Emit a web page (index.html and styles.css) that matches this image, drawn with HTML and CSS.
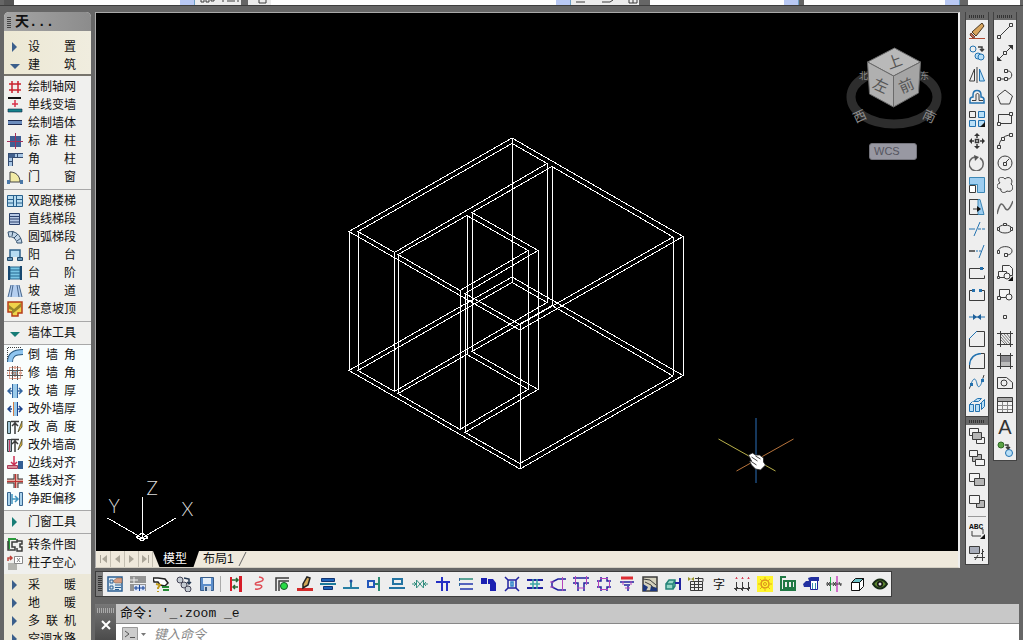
FILE: index.html
```html
<!DOCTYPE html>
<html lang="zh-CN">
<head>
<meta charset="utf-8">
<title>CAD</title>
<link rel="stylesheet" href="styles.css">
</head>
<body>
<div class="app">
<header class="topbar">
  <div class="strip strip-a"><select class="combo" aria-label="工作空间"></select><svg class="bits" viewBox="0 0 46 5"><path class="k" d="M6 0v2h3v-2m2 0v2h3v-2m2 0v1h3v-1M28 0v2M32 1h8M43 0v2"/></svg></div>
  <div class="strip strip-b"><svg class="bits-s" viewBox="0 0 23 5"><path class="k" d="M11 0v3h7v-3"/></svg><select class="combo" aria-label="图层"></select><svg class="bits-l" viewBox="0 0 68 5"><path class="k" d="M5 2h9M31 2h8l3-2M58 0v3h8v-3M62 0v3"/></svg></div>
  <div class="strip strip-c"><select class="combo" aria-label="颜色"></select></div>
  <div class="strip strip-d"><select class="combo" aria-label="线型"></select></div>
  <div class="strip strip-e"></div>
</header>
<div class="main">
<nav class="side" aria-label="天正屏幕菜单">
  <h1 class="side-title">天...</h1>
  <div class="group head">
    <button class="item"><svg class="ico" viewBox="0 0 16 16"><path fill="#3b5f8c" d="M5 3l5 5-5 5z"/></svg><span class="lbl">设 置</span></button>
    <button class="item"><svg class="ico" viewBox="0 0 16 16"><path fill="#3b5f8c" d="M3 7h10l-5 5z"/></svg><span class="lbl">建 筑</span></button>
  </div>
  <div class="group">
    <button class="item"><svg class="ico" viewBox="0 0 16 16"><path stroke="#c8202c" stroke-width="1.5" d="M5 2v12M11 2v12M2 5h12M2 11h12"/></svg><span class="lbl">绘制轴网</span></button>
    <button class="item"><svg class="ico" viewBox="0 0 16 16"><path fill="#111" d="M1 0h13v2H1z"/><path fill="#15838c" stroke="#124" stroke-width=".6" d="M1 12h14v3H1z"/><path stroke="#d8304a" stroke-width="1.5" d="M8 3v7M5 7h6"/></svg><span class="lbl">单线变墙</span></button>
    <button class="item"><svg class="ico" viewBox="0 0 16 16"><path fill="#6c8dbd" d="M1 5h14v5H1z"/><path stroke="#1d2b50" d="M1 5.500h14M1 9.500h14"/></svg><span class="lbl">绘制墙体</span></button>
    <button class="item"><svg class="ico" viewBox="0 0 16 16"><path fill="#3f5e94" d="M3 3h11v11H3z"/><path stroke="#a3305c" d="M8.500 0v16M0 8.500h16"/></svg><span class="lbl">标 准 柱</span></button>
    <button class="item"><svg class="ico" viewBox="0 0 16 16"><path fill="#a8c6e4" d="M1 2h15v5H6v8H1z"/><path fill="#41608e" d="M1 2h7v5H1z"/><path stroke="#344b70" d="M1 2.500h15M1.500 2v13M5.500 15V6.500H16M10.500 3v3M2 10.500h3"/></svg><span class="lbl">角 柱</span></button>
    <button class="item"><svg class="ico" viewBox="0 0 16 16"><path fill="#f2eba5" stroke="#444" d="M3 13V3c6 0 10 4 10 10z"/><path fill="#4a78a8" d="M0 11h3v4H0zM13 11h3v4h-3z"/></svg><span class="lbl">门 窗</span></button>
  </div>
  <div class="group">
    <button class="item"><svg class="ico" viewBox="0 0 16 16"><path fill="#b8dcf0" stroke="#28608c" d="M.5 2.500h15v11H.5zM6.500 2v12M9.500 2v12M1 6.500h5M1 10h5M10 6.500h5M10 10h5"/></svg><span class="lbl">双跑楼梯</span></button>
    <button class="item"><svg class="ico" viewBox="0 0 16 16"><path fill="#b6c8e4" stroke="#2b416c" d="M2.500 2.500h10v11h-10zM3 5.500h10M3 8h10M3 11h10"/></svg><span class="lbl">直线梯段</span></button>
    <button class="item"><svg class="ico" viewBox="0 0 16 16"><path fill="#c3d6e8" stroke="#34506c" d="M1 3c7-2 13 3 14 11h-5C9 10 6 7 2 8zM6 2L5 7M11 5L7 9M14 9l-4 3"/></svg><span class="lbl">圆弧梯段</span></button>
    <button class="item"><svg class="ico" viewBox="0 0 16 16"><path fill="#b7dcf2" stroke="#31638c" stroke-width="1.500" d="M3 10V3h10v7"/><path fill="#6c9abb" stroke="#234a6c" d="M.5 10.500h5v3h-5zM10.500 10.500h5v3h-5z"/></svg><span class="lbl">阳 台</span></button>
    <button class="item"><svg class="ico" viewBox="0 0 16 16"><path fill="#79c6e5" stroke="#25648c" d="M3 2h10v12H3zM3 5h10M3 8h10M3 11h10"/><path stroke="#174870" stroke-width="2" d="M2 1v14M14 1v14"/></svg><span class="lbl">台 阶</span></button>
    <button class="item"><svg class="ico" viewBox="0 0 16 16"><path fill="#b5cff0" d="M4 2h8l3 12H1z"/><path stroke="#45658c" d="M4 2L1 14M12 2l3 12M6 2L4 14M10 2l2 12"/></svg><span class="lbl">坡 道</span></button>
    <button class="item"><svg class="ico" viewBox="0 0 16 16"><path fill="#efd24a" stroke="#b63c18" stroke-width="1.500" d="M1 1h14v11h-4v3H5v-4H1z"/><path fill="#98862a" d="M2 4l5 4 7-6v4l-5 4-4 3V9L2 8z"/></svg><span class="lbl">任意坡顶</span></button>
  </div>
  <div class="group tight">
    <button class="item"><svg class="ico" viewBox="0 0 16 16"><path fill="#177c76" d="M3 7h10l-5 5z"/></svg><span class="lbl">墙体工具</span></button>
  </div>
  <div class="group white">
    <button class="item"><svg class="ico" viewBox="0 0 16 16"><path stroke="#29597f" stroke-width="6" d="M3 15C3 8 7 5 16 5"/><path stroke="#8fc5ef" stroke-width="4" d="M3 15C3 8 7 5 16 5"/><path class="k" stroke-dasharray="1 1" d="M.5 12V.5H14"/></svg><span class="lbl">倒 墙 角</span></button>
    <button class="item"><svg class="ico" viewBox="0 0 16 16"><path fill="#94bcc9" d="M5 5h6v6H5z"/><path stroke="#555" d="M0 5.500h16M0 10.500h16M5.500 1v14M10.500 1v14"/><path stroke="#c75a3a" stroke-dasharray="1 1" d="M2.500 2.500h11v11h-11zM0 8h16M8 1v14"/></svg><span class="lbl">修 墙 角</span></button>
    <button class="item"><svg class="ico" viewBox="0 0 16 16"><path fill="#9bcbea" d="M6 1h4v14H6z"/><path stroke="#3265a0" d="M5.500 1v14M10.500 1v14"/><path stroke="#3265a0" stroke-width="1.500" d="M1 8h4M4 5L1 8l3 3M11 8h4M12 5l3 3-3 3"/></svg><span class="lbl">改 墙 厚</span></button>
    <button class="item"><svg class="ico" viewBox="0 0 16 16"><path fill="#9bcbea" d="M6 1h5v14H6z"/><path stroke="#d37b42" d="M6.500 1v14"/><path stroke="#1d438c" d="M10.500 1v14"/><path stroke="#1d438c" stroke-width="1.500" d="M1 8h4M4 5L1 8l3 3M11 8h4M12 5l3 3-3 3"/></svg><span class="lbl">改外墙厚</span></button>
    <button class="item"><svg class="ico" viewBox="0 0 16 16"><path fill="#a1c7d8" stroke="#344" d="M.5 2.500h3v12h-3z"/><path class="k" stroke-width="1.500" d="M4 2.500h8M8 3v12M5 7l3-3 3 3"/><path fill="#e6bf3e" stroke="#332" stroke-width=".7" d="M12 10l3-8v6l-4 5z"/></svg><span class="lbl">改 高 度</span></button>
    <button class="item"><svg class="ico" viewBox="0 0 16 16"><path fill="#a7a6b7" stroke="#344" d="M.5 2.500h4v12h-4z"/><path stroke="#c53d65" d="M2.500 3v12"/><path class="k" stroke-width="1.500" d="M4 2.500h8M8 3v12M5 7l3-3 3 3"/><path fill="#e6bf3e" stroke="#332" stroke-width=".7" d="M12 10l3-8v6l-4 5z"/></svg><span class="lbl">改外墙高</span></button>
    <button class="item"><svg class="ico" viewBox="0 0 16 16"><path fill="#325e94" d="M11 6h5v8h-5z"/><path fill="#d98c98" stroke="#a73c59" d="M.5 10.500h10v3H.5z"/><path stroke="#cc3154" stroke-width="1.500" d="M7 1v9M4 7l3 3 3-3"/></svg><span class="lbl">边线对齐</span></button>
    <button class="item"><svg class="ico" viewBox="0 0 16 16"><path stroke="#333" stroke-width="5" d="M0 8h16M9 1v14"/><path stroke="#e9b1a8" stroke-width="3" d="M0 8h16M9 1v14"/><path stroke="#bd3534" d="M0 8.500h16M8.500 1v14"/></svg><span class="lbl">基线对齐</span></button>
    <button class="item"><svg class="ico" viewBox="0 0 16 16"><path fill="#a9d1eb" stroke="#37658f" d="M.5 1.500h3v13h-3zM12.500 1.500h3v13h-3z"/><path stroke="#3f94bf" stroke-width="1.500" d="M5 3v10M5 8h6M8 5l3 3-3 3"/></svg><span class="lbl">净距偏移</span></button>
  </div>
  <div class="group tight">
    <button class="item"><svg class="ico" viewBox="0 0 16 16"><path fill="#177c76" d="M5 3l5 5-5 5z"/></svg><span class="lbl">门窗工具</span></button>
  </div>
  <div class="group last">
    <button class="item"><svg class="ico" viewBox="0 0 16 16"><path stroke="#2a9a3c" stroke-width="2" d="M2 12V2h7"/><path class="k" stroke-width="1.500" d="M1 4v9h7v-3H5V5h5V2M10 4h5v3h-2v3h2v4h-5v-3"/></svg><span class="lbl">转条件图</span></button>
    <button class="item"><svg class="ico" viewBox="0 0 16 16"><path fill="#b3b3ae" d="M1 8h9v7H1z"/><path fill="#fff" stroke="#888" d="M7.500 1.500h8v7h-8zM10 3l3 4M13 3l-3 4"/><path stroke="#bd4038" stroke-width="1.500" d="M1 6V3h4M3 1l2 2-2 2"/></svg><span class="lbl">柱子空心</span></button>
  </div>
  <div class="group rest">
    <button class="item"><svg class="ico" viewBox="0 0 16 16"><path fill="#3b5f8c" d="M5 3l5 5-5 5z"/></svg><span class="lbl">采 暖</span></button>
    <button class="item"><svg class="ico" viewBox="0 0 16 16"><path fill="#3b5f8c" d="M5 3l5 5-5 5z"/></svg><span class="lbl">地 暖</span></button>
    <button class="item"><svg class="ico" viewBox="0 0 16 16"><path fill="#3b5f8c" d="M5 3l5 5-5 5z"/></svg><span class="lbl">多 联 机</span></button>
    <button class="item"><svg class="ico" viewBox="0 0 16 16"><path fill="#3b5f8c" d="M5 3l5 5-5 5z"/></svg><span class="lbl">空调水路</span></button>
  </div>
</nav>
<div class="work">
<div class="upper">
<main class="drawing">
  <div class="canvas">
  <svg class="scene" viewBox="97 13 861 538" role="img" aria-label="三维线框模型">
    <defs>
      <path id="plan" d="M512.500 138L683.500 236.500L520.500 330L349.500 231.500Z M395 252.500L358.500 231.500L512.500 143.500L547.500 163.500Z M398.500 254.500L467.500 215.500L528.500 250.500L460.500 290.500Z M465.500 293.500L538.500 250.500L472.500 212.500L552.500 166.500L673.500 237L520.500 324.500Z"/>
    </defs>
    <g class="wire">
      <use href="#plan"/><use href="#plan" y="139"/>
      <path d="M349.500 231v139M358.500 231v139M395 252v139M398.500 254v139M460.500 290v139M465.500 293v139M467.500 215v139M472.500 212v139M528.500 250v139M538.500 250v139M512.500 138v144M547.500 163v139M552.500 166v139M673.500 237v138M683.500 236v139M520.500 324v145"/>
      <path d="M142.500 497v41L108 518M142.500 538l34-20"/>
      <path d="M142.500 533l6 4-6 4-6-4zM137 538h11"/>
    </g>
    <g class="axis"><text x="109" y="513">Y</text><text x="147" y="495">Z</text><text x="182" y="516">X</text></g>
    <ellipse cx="894.500" cy="97" rx="43" ry="27" stroke="#2d2d2d" stroke-width="9"/>
    <path fill="#b9b9b9" stroke="#6a6a6a" d="M895 48l26 14-27 14-26-14z"/>
    <path fill="#b0b0b0" stroke="#6a6a6a" d="M868 62l26 14v31l-24-13z"/>
    <path fill="#a5a5a5" stroke="#6a6a6a" d="M921 62l-27 14v31l25-14z"/>
    <g class="face"><text x="895" y="67" transform="rotate(-20 895 62)">上</text><text x="881" y="91" transform="rotate(24 881 86)">左</text><text x="907" y="91" transform="rotate(-24 907 86)">前</text></g>
    <g class="compass"><text x="860" y="121" transform="rotate(-25 860 116)">西</text><text x="930" y="121" transform="rotate(25 930 116)">南</text><text class="far" x="864" y="79">北</text><text class="far" x="925" y="79">东</text></g>
    <path stroke="#2b6fb8" d="M756.500 418v65"/><path stroke="#b8b04a" d="M719 439l57 32"/><path stroke="#b8743c" d="M794 439l-57 32"/>
    <path fill="#fff" stroke="#222" stroke-width=".8" d="M749 455l4-2 3 2 4 0 4 3 0 4 2 3-5 5-5-1-4-4-2-4h2z"/><path stroke="#444" d="M752 457l6 4M751 461l6 4M756 456l5 3"/>
  </svg>
  <button class="wcs">WCS</button>
  </div>
  <div class="tabs">
    <button class="nav" aria-label="第一个"><svg viewBox="0 0 14 14"><path fill="#aaa598" d="M3 3h1v8H3zM10 3v8L5 7z"/></svg></button><button class="nav" aria-label="上一个"><svg viewBox="0 0 14 14"><path fill="#aaa598" d="M9 3v8L4 7z"/></svg></button><button class="nav" aria-label="下一个"><svg viewBox="0 0 14 14"><path fill="#aaa598" d="M4 3v8l5-4z"/></svg></button><button class="nav" aria-label="最后一个"><svg viewBox="0 0 14 14"><path fill="#aaa598" d="M3 3v8l5-4zM9 3h1v8H9z"/></svg></button>
    <button class="tab active">模型</button>
    <button class="tab">布局1</button><svg class="slash" viewBox="0 0 10 16"><path stroke="#666" d="M1 15L8 1"/></svg>
  </div>
</main>
<aside class="palettes">
 <div class="col">
 <div class="palette" role="toolbar" aria-label="修改">
  <div class="grip"></div>
  <button title="删除"><svg class="ico" viewBox="0 0 16 16"><path stroke="#b04a33" d="M0 15.500h16"/><path fill="#c4705c" stroke="#70402c" d="M2 10l4 4-2 1-3-3z"/><path fill="#d9a55d" stroke="#48351f" d="M3 9L13 0l2 3-8 10z"/></svg></button>
  <button title="复制"><svg class="ico" viewBox="0 0 16 16"><circle class="b" cx="4" cy="4" r="3"/><circle class="lb b" cx="9" cy="11" r="3"/><circle class="lb b" cx="12" cy="12" r="3"/><path class="k" stroke-width="1.500" d="M9 2h4v4M11 4l2 2 2-2"/></svg></button>
  <button title="镜像"><svg class="ico" viewBox="0 0 16 16"><path class="k" d="M5.500 2v12H.5zM8 0v16"/><path class="lb b" d="M10.500 2v12h5z"/></svg></button>
  <button title="偏移"><svg class="ico" viewBox="0 0 16 16"><path class="b" stroke-width="1.500" d="M1 14v-3q0-3 3-3V6c0-6 8-6 8 0v2q3 0 3 3v3z"/><path class="k" d="M3 11.500h4V6c0-2 3-2 3 0v5.500h4"/></svg></button>
  <button title="阵列"><svg class="ico" viewBox="0 0 16 16"><path class="k" d="M.5.500h6v6h-6z"/><path class="lb b" d="M9.500.500h6v6h-6zM.5 9.500h6v6h-6zM9.500 9.500h6v3l-3 3h-3z"/><path fill="#111" d="M16 11v5h-5z"/></svg></button>
  <button title="移动"><svg class="ico" viewBox="0 0 16 16"><path class="k" stroke-width="1.500" d="M6.500 6.500h3v3h-3zM8 1v4M8 11v4M1 8h4M11 8h4"/><path fill="#333" d="M8 0l3 3H5zM8 16l3-3H5zM0 8l3-3v6zM16 8l-3-3v6z"/></svg></button>
  <button title="旋转"><svg class="ico" viewBox="0 0 16 16"><path stroke="#666" stroke-width="1.500" d="M6 2a7 7 0 1 0 5 1"/><path fill="#555" d="M5 0l5 2-4 4z"/></svg></button>
  <button title="缩放"><svg class="ico" viewBox="0 0 16 16"><path fill="#9dcdf0" stroke="#3c87b5" d="M.5.500h15v15h-7v-8h-8z"/><path fill="#fff" class="k" d="M.5 8.500h6v7h-6z"/></svg></button>
  <button title="拉伸"><svg class="ico" viewBox="0 0 16 16"><path fill="#9dcdf0" stroke="#3c87b5" d="M9 .5h2l4 15H9z"/><path class="k" d="M9 .5H.5v15H9M4 10h5"/><path fill="#111" d="M8 7l4 3-4 3z"/></svg></button>
  <button title="修剪"><svg class="ico" viewBox="0 0 16 16"><path class="b" d="M11 1L5 15M0 8h6"/><path class="b" stroke-dasharray="3 1" d="M9 8h7"/></svg></button>
  <button title="延伸"><svg class="ico" viewBox="0 0 16 16"><path class="b" d="M15 2l-5 13"/><path class="k" stroke-width="1.500" d="M0 8h6"/><path class="b" stroke-dasharray="2 1" d="M7 8h5"/></svg></button>
  <button title="打断于点"><svg class="ico" viewBox="0 0 16 16"><path class="k" d="M15 3.500H.5v10h15v-3"/><path fill="#2470ad" d="M11 2h3v3h-3z"/></svg></button>
  <button title="打断"><svg class="ico" viewBox="0 0 16 16"><path class="k" d="M3 3.500H.5v10h15v-10H13"/><path fill="#2470ad" d="M3 2h3v3H3zM10 2h3v3h-3z"/></svg></button>
  <button title="合并"><svg class="ico" viewBox="0 0 16 16"><path class="b" d="M0 8h16"/><path fill="#1d5f9a" d="M4 5l4 3-4 3zM12 5L8 8l4 3z"/></svg></button>
  <button title="倒角"><svg class="ico" viewBox="0 0 16 16"><path class="k" d="M.5 8v7.500h15V.5H8"/><path class="b" d="M0 8l8-8"/></svg></button>
  <button title="圆角"><svg class="ico" viewBox="0 0 16 16"><path class="k" d="M.5 12v3.500h15V.5H12"/><path class="b" stroke-width="1.500" d="M.5 12C1 5 5 1 12 .5"/></svg></button>
  <button title="光顺曲线"><svg class="ico" viewBox="0 0 16 16"><path class="b" d="M2 9c3-8 5-5 6 0s4 3 6-6"/><path class="k" d="M0 14l2-4M14 3l1-3"/><path fill="#2470ad" d="M1 8h3v3H1zM12 4h3v3h-3z"/></svg></button>
  <button title="分解"><svg class="ico" viewBox="0 0 16 16"><path class="lb b" d="M.5 7.500h4v7h-4zM4.500 4.500l4-3h4l-3 3zM6.500 7.500h4v7h-4zM12.500 5.500l3-3v7l-3 3zM.5 7.500l3-3M10.500 7.500l2-2"/></svg></button>
 </div>
 <div class="palette order" role="toolbar" aria-label="绘图次序">
  <div class="grip"></div>
  <button title="前置"><svg class="ico" viewBox="0 0 16 16"><path class="pf k" d="M.5.500h9v7h-9zM7.500 9.500h8v6h-8z"/><path class="gf k" d="M3.500 4.500h9v7h-9z"/></svg></button>
  <button title="后置"><svg class="ico" viewBox="0 0 16 16"><path class="gf k" d="M3.500 4.500h9v7h-9z"/><path class="pf k" d="M.5.500h8v6h-8zM6.500 9.500h9v6h-9z"/></svg></button>
  <button title="置于对象之上"><svg class="ico" viewBox="0 0 16 16"><path class="pf k" d="M.5 1.500h10v8H.5z"/><path class="gf k" d="M5.500 6.500h10v7h-10z"/></svg></button>
  <button title="置于对象之下"><svg class="ico" viewBox="0 0 16 16"><path class="gf k" d="M7.500 6.500h8v7h-8z"/><path class="pf k" d="M.5 1.500h10v8H.5z"/></svg></button>
  <i class="hsep"></i>
  <button title="注释前置"><svg class="ico" viewBox="0 0 16 16"><text class="abc" x="0" y="6">ABC</text><path class="k" d="M3 8v5h9M12 6h2v5"/><path fill="#111" d="M16 11v5h-5z"/></svg></button>
  <button title="图案填充后置"><svg class="ico" viewBox="0 0 16 16"><path fill="#a8adba" class="k" d="M.5 1.500h10v7H.5z"/><path class="k" d="M13.500 4v12M5 12.500h11M9 10l-3 5M15 6l-3 3"/></svg></button>
 </div>
 </div>
 <div class="palette" role="toolbar" aria-label="绘图">
  <div class="grip"></div>
  <button title="直线"><svg class="ico" viewBox="0 0 16 16"><path class="k" d="M2 14L14 2"/><path class="pf k" d="M.5 12.500h3v3h-3zM12.500.500h3v3h-3z"/></svg></button>
  <button title="构造线"><svg class="ico" viewBox="0 0 16 16"><path class="k" d="M1 15L15 1"/><path class="pf k" d="M6.500 6.500h3v3h-3z"/><path fill="#333" d="M16 0v5l-5-5zM0 16v-5l5 5z"/></svg></button>
  <button title="多段线"><svg class="ico" viewBox="0 0 16 16"><path class="k" d="M1 12h10c5 0 5-8 0-8H9"/><path class="pf k" d="M.5 10.500h3v3h-3zM7.500 10.500h3v3h-3zM7.500 2.500h3v3h-3z"/></svg></button>
  <button title="多边形"><svg class="ico" viewBox="0 0 16 16"><path class="k" d="M8 1l7.500 6-3 8h-9l-3-8z"/></svg></button>
  <button title="矩形"><svg class="ico" viewBox="0 0 16 16"><path class="k" d="M1.500 3.500h13v9h-13z"/><path class="pf k" d="M.5 11.500h3v3h-3zM12.500 1.500h3v3h-3z"/></svg></button>
  <button title="圆弧"><svg class="ico" viewBox="0 0 16 16"><path class="k" d="M2 14C2 8 6 2 14 2"/><path class="pf k" d="M.5 12.500h3v3h-3zM4.500 4.500h3v3h-3zM12.500.500h3v3h-3z"/></svg></button>
  <button title="圆"><svg class="ico" viewBox="0 0 16 16"><circle class="k" cx="8" cy="8" r="7"/><path class="k" d="M8 8l4-4M6.500 7.500h3v3h-3z"/></svg></button>
  <button title="修订云线"><svg class="ico" viewBox="0 0 16 16"><path class="k" d="M8 2c4-4 9 1 6 5 4 3 1 9-4 7-3 3-7 1-6-2-5 0-5-5-1-6-4-5 2-8 5-4z"/></svg></button>
  <button title="样条曲线"><svg class="ico" viewBox="0 0 16 16"><path stroke="#666" stroke-width="1.500" d="M0 15C4-1 6 6 8 9s4 3 8-7"/></svg></button>
  <button title="椭圆"><svg class="ico" viewBox="0 0 16 16"><ellipse class="k" cx="8" cy="8" rx="7" ry="4"/><path class="pf k" d="M.5 6.500h2v3h-2zM13.500 6.500h2v3h-2zM6.500 2.500h3v2h-3z"/></svg></button>
  <button title="椭圆弧"><svg class="ico" viewBox="0 0 16 16"><path class="k" d="M1 9c0-7 14-7 14-1 0 3-3 4-6 4"/><path class="pf k" d="M.5 7.500h2v3h-2zM7.500 10.500h3v3h-3z"/></svg></button>
  <button title="插入块"><svg class="ico" viewBox="0 0 16 16"><path class="pf k" d="M5.500.500h7l3 3v7h-10z"/><path class="pf k" d="M1.500 6.500h8v6h-8z"/><circle class="pf k" cx="10" cy="11" r="3"/><path class="pf k" d="M.5 11.500h2v2h-2z"/><path fill="#111" d="M16 11v5h-5z"/></svg></button>
  <button title="创建块"><svg class="ico" viewBox="0 0 16 16"><path class="pf k" d="M2.500 2.500h10v8h-10z"/><circle class="pf k" cx="12" cy="10" r="3"/><path class="pf k" d="M.5 9.500h3v3h-3z"/></svg></button>
  <button title="点"><svg class="ico" viewBox="0 0 16 16"><path class="pf k" d="M6.500 6.500h3v3h-3z"/></svg></button>
  <button title="图案填充"><svg class="ico" viewBox="0 0 16 16"><path class="k" d="M3.500 0v16M0 2.500h16M13.500 0v16M0 13.500h16"/><path stroke="#777" d="M4 3l9 10M7 3l6 7M4 6l6 7M10 3l3 4M4 9l4 4"/></svg></button>
  <button title="渐变色"><svg class="ico" viewBox="0 0 16 16"><path fill="#8a8a8e" d="M4 3h9v7H4z"/><path fill="#bbb" d="M4 9h9v4H4z"/><path class="k" d="M3.500 0v16M0 2.500h16M13.500 0v16M0 13.500h16"/></svg></button>
  <button title="面域"><svg class="ico" viewBox="0 0 16 16"><path class="k" d="M.5 2.500h9l6 5v6H.5z"/><circle class="k" cx="7" cy="8" r="3"/></svg></button>
  <button title="表格"><svg class="ico" viewBox="0 0 16 16"><path class="pf k" d="M.5.500h15v15H.5z"/><path fill="#aaa" d="M1 1h14v3H1z"/><path stroke="#888" d="M1 8.500h14M1 12.500h14M5.500 4v11M10.500 4v11"/><path class="k" d="M0 4.500h16"/></svg></button>
  <button title="多行文字"><span class="letter">A</span></button>
  <button title="添加选定对象"><svg class="ico" viewBox="0 0 16 16"><circle cx="4" cy="4" r="3" fill="#5aa243" stroke="#2d6625"/><circle class="lb b" cx="12" cy="12" r="3.500"/><path class="k" stroke-width="1.500" d="M8 4h3v4M9 6l2 2 2-2"/></svg></button>
 </div>
</aside>
</div>
<div class="toolrow" role="toolbar" aria-label="自定义工具栏">
  <div class="vgrip"></div>
  <button title="选项"><svg class="ico" viewBox="0 0 16 16"><path stroke="#2a5d93" stroke-width="1.500" fill="#dbe8f1" d="M1 1h14v14H1z"/><path stroke="#2a5d93" d="M3 4h3v3H3zM3 10h3v3H3zM8 9h6M8 11.500h6M8 13.500h4"/><path fill="#d79c82" stroke="#654" stroke-width=".5" d="M6 5l4-3h5v5H8z"/></svg></button>
  <button title="图层设置"><svg class="ico" viewBox="0 0 16 16"><path fill="#949494" d="M0 0h16v15H0z"/><path stroke="#eee" d="M4 1v7M0 4h8M0 7.500h16"/><path fill="#dde6fa" d="M4 9h11v6H4z"/><path stroke="#164396" d="M4 12h11M9.500 9v6M6 10v4M13 10v4"/></svg></button>
  <button title="帮助"><svg class="ico" viewBox="0 0 16 16"><path fill="#fff" stroke="#222" stroke-width="1.500" d="M0 2h5l7 1 3 4-3 3-5-1-2-3H1z"/><path stroke="#c09b1c" stroke-width="2" d="M3 8l4 1-2 3v1M5 15v1"/><path stroke="#268a35" stroke-width="2" d="M9 11h7M10 14h6"/></svg></button>
  <button title="过滤选择"><svg class="ico" viewBox="0 0 16 16"><circle cx="4" cy="4" r="3" fill="#c4cbd2" stroke="#445"/><circle cx="8" cy="9" r="3" fill="#c4cbd2" stroke="#445"/><circle cx="12" cy="13" r="3" fill="#c4cbd2" stroke="#445"/><path stroke="#253851" stroke-width="1.500" d="M8 2l5 1v5M11 6l2 2 2-2"/></svg></button>
  <button title="保存"><svg class="ico" viewBox="0 0 16 16"><path fill="#5a8dcb" stroke="#385d8b" d="M1.500 1.500h13v13h-13z"/><path fill="#e4eef8" d="M4 2h8v6H4z"/><path fill="#ccd7e3" d="M5 10h7v5H5z"/><path fill="#35577e" d="M6 11h2v4H6z"/></svg></button>
  <i class="vsep"></i>
  <button title="墙对齐"><svg class="ico" viewBox="0 0 16 16"><path fill="#d71c28" d="M2 1h2v14H2zM11 0h3v16h-3z"/><path stroke="#286833" stroke-width="1.500" d="M4 4h6M8 2l2 2-2 2M10 11H5M7 9l-2 2 2 2"/></svg></button>
  <button title="曲线"><svg class="ico" viewBox="0 0 16 16"><path stroke="#df4c55" stroke-width="1.500" d="M8 1c6 1 5 4 0 5s-5 3 0 3 3 5-4 4"/></svg></button>
  <button title="墙角填充"><svg class="ico" viewBox="0 0 16 16"><path class="k" stroke-width="1.500" d="M2 15V2h13M5 15V5h10"/><circle cx="10" cy="10" r="3.500" fill="#28dc45" stroke="#175527"/></svg></button>
  <button title="绘制"><svg class="ico" viewBox="0 0 16 16"><path fill="#d32a2a" d="M0 12h16v3H0z"/><path fill="#d2a858" stroke="#222" stroke-width="1.500" d="M6 12V8l4-7 3 1-2 7z"/></svg></button>
  <button title="窗"><svg class="ico" viewBox="0 0 16 16"><path fill="#1c62b7" stroke="#113472" d="M1.500 2.500h13v3h-13zM3.500 10.500h9v3h-9z"/><path stroke="#1b7a9b" stroke-width="2" d="M0 8h16"/></svg></button>
  <button title="插入"><svg class="ico" viewBox="0 0 16 16"><path stroke="#287fa4" stroke-width="2" d="M0 12h16M8 4v7"/><circle cx="8" cy="5" r="1.500" fill="#224b9f"/></svg></button>
  <button title="右齐"><svg class="ico" viewBox="0 0 16 16"><path stroke="#2357ba" stroke-width="2" d="M2 5h6v6H2z"/><path stroke="#2d8a74" stroke-width="2" d="M9 8h4M13 1v14"/></svg></button>
  <button title="底齐"><svg class="ico" viewBox="0 0 16 16"><path stroke="#2474a2" stroke-width="2" d="M4 3h9v5H4zM0 12h16"/></svg></button>
  <button title="阀门"><svg class="ico" viewBox="0 0 16 16"><path stroke="#369081" d="M0 8h4M12 8h4M4.500 4v8l7-8v8zM2 6l2 2-2 2M14 6l-2 2 2 2"/></svg></button>
  <button title="丁字"><svg class="ico" viewBox="0 0 16 16"><path stroke="#242fc4" stroke-width="2" d="M1 6h14M7 1v14M12 7v8"/></svg></button>
  <button title="多线"><svg class="ico" viewBox="0 0 16 16"><path stroke="#2a8a78" stroke-width="1.500" d="M2 3h13"/><path stroke="#2336ad" stroke-width="1.500" d="M2 8h13M2 13h13"/><path stroke="#2b659c" d="M1.500 2v3M1.500 7v3"/></svg></button>
  <button title="弯头"><svg class="ico" viewBox="0 0 16 16"><path fill="#1b20b1" d="M0 2h6v6H0zM7 3h5l3 4v8H9V8H7z"/></svg></button>
  <button title="交叉"><svg class="ico" viewBox="0 0 16 16"><path class="n" stroke-width="1.500" d="M4 4h8v8H4zM1 1l3 3M15 1l-3 3M1 15l3-3M15 15l-3-3"/><path stroke="#2e86cb" stroke-width="1.500" d="M7 6h2v4H7z"/></svg></button>
  <button title="风管"><svg class="ico" viewBox="0 0 16 16"><path class="n" stroke-width="2" d="M0 4h16M0 12h16"/><path stroke="#3ba7a5" stroke-width="1.500" d="M3 8h10M6 3v10M10 3v10"/></svg></button>
  <button title="变径"><svg class="ico" viewBox="0 0 16 16"><path class="n" stroke-width="1.500" d="M16 3H8L2 6v5l6 3h8"/><path class="m" d="M0 6h4M0 11h4M12.500 1v14"/></svg></button>
  <button title="三通"><svg class="ico" viewBox="0 0 16 16"><path class="n" stroke-width="1.500" d="M0 2h16M0 7h5v8M16 7h-5v8"/><path class="m" d="M2.500 0v9M13.500 0v9M4 12h8"/></svg></button>
  <button title="四通"><svg class="ico" viewBox="0 0 16 16"><path class="n" stroke-width="1.500" d="M1 5h4V1M11 1v4h4M1 11h4v4M11 15v-4h4"/><path class="m" d="M4 2.500h8M4 13.500h8M2.500 4v8M13.500 4v8"/></svg></button>
  <button title="法兰"><svg class="ico" viewBox="0 0 16 16"><path stroke="#de2e34" stroke-width="3" d="M2 2h12"/><path class="n" stroke-width="1.500" d="M1 6h14M5 9h6M9 10v5"/><path class="m" d="M4 5v4M12 5v4M6 12h5"/></svg></button>
  <button title="查看图块"><svg class="ico" viewBox="0 0 16 16"><path fill="#d4d1bd" class="k" stroke-width="1.500" d="M1 1h14v14H1z"/><path fill="#1d377e" d="M1 8l5 3-2 4H1zM9 10l6 2v3H8z"/><path class="k" d="M1 3l7 1 6 5M3 6l6 3 3 4"/></svg></button>
  <button title="设备"><svg class="ico" viewBox="0 0 16 16"><path fill="#95d6c5" stroke="#248378" stroke-width="1.500" d="M1 8h7v5H1zM1 8l3-4h6v6l-2 3M8 8l2-4"/><path class="n" stroke-width="2" d="M10 7h5M15 2v12"/></svg></button>
  <button title="表格统计"><svg class="ico" viewBox="0 0 16 16"><path class="k" d="M2.500 5.500h12v9h-12zM2 8.500h13M2 11.500h13M6.500 5v10M10.500 1v14M7 2.500h8v3"/><path fill="#999529" d="M0 1l3 2 3-2v4L3 3 0 5z"/></svg></button>
  <button title="文字"><svg class="ico" viewBox="0 0 16 16"><text class="zi" x="2" y="13">字</text></svg></button>
  <button title="轴线标注"><svg class="ico" viewBox="0 0 16 16"><path class="k" d="M2.500 6v9M8.500 6v9M14.500 6v9M0 12.500h16M1 14l3-3M7 14l3-3M13 14l3-3"/><path fill="#d64459" d="M2 1h1v2H2zM8 1h1v2H8zM14 1h1v2h-1zM1 2h3v0.600H1zM7 2h3v.6H7zM13 2h3v.6h-3z"/></svg></button>
  <button title="灯"><svg class="ico" viewBox="0 0 16 16"><path fill="#fff52c" d="M0 0h16v16H0z"/><circle cx="8" cy="8" r="4" stroke="#df911d" stroke-width="1.500"/><circle cx="8" cy="8" r="1.500" stroke="#df911d"/><path stroke="#e2ab1c" d="M8 1v2M8 13v2M1 8h2M13 8h2M3 3l2 2M13 3l-2 2M3 13l2-2M13 13l-2-2"/></svg></button>
  <button title="柱状"><svg class="ico" viewBox="0 0 16 16"><path stroke="#207844" stroke-width="2" d="M1 14V1h5M0 14h16M4 4v8h11V5H4M8 6v6M12 6v6"/></svg></button>
  <button title="弯管"><svg class="ico" viewBox="0 0 16 16"><path class="n" fill="#fff" d="M7.500 3.500h7v10h-7z"/><path fill="#2230a0" d="M0 8l3-3h4v6H1zM5 2l3-1h8v4H6z"/><path stroke="#368caa" d="M9.500 7v6M12.500 7v6"/></svg></button>
  <button title="连接"><svg class="ico" viewBox="0 0 16 16"><path stroke="#22ae4c" d="M4.500 1v14"/><path stroke="#c947bf" stroke-width="1.500" d="M11 0v16"/><path class="k" d="M0 8h16M1 6l3 4M4 6l-3 4M7 6l3 4M10 6l-3 4M13 6l2 4"/></svg></button>
  <button title="三维"><svg class="ico" viewBox="0 0 16 16"><path fill="#fff" stroke="#111" d="M2.500 6.500h8v8h-8zM10.500 6.500l4-4v8l-4 4z"/><path fill="#6ac1c5" stroke="#111" d="M2.500 6.500l4-4h8l-4 4z"/></svg></button>
  <button title="观察"><svg class="ico" viewBox="0 0 16 16"><path fill="#5a832d" stroke="#172b16" stroke-width="2" d="M1 8c4-6 10-6 14 0-4 6-10 6-14 0z"/><circle cx="8" cy="8" r="3" fill="#111"/><circle cx="8" cy="8" r="1.500" fill="#ddd"/></svg></button>
</div>
<section class="command">
  <div class="cmd-side"><span class="dots"></span><button class="close" aria-label="关闭"><svg viewBox="0 0 10 10"><path stroke="#fff" stroke-width="2" d="M1 1l8 8M9 1L1 9"/></svg></button></div>
  <div class="cmd-body">
    <output class="history">命令: '_.zoom _e</output>
    <div class="cmd-line"><button class="prompt" aria-label="最近使用的命令"><svg viewBox="0 0 26 14"><path fill="#ccc" stroke="#999" d="M.5.500h15v13H.5z"/><path stroke="#555" d="M3 4l4 3-4 3M8 10.500h5"/><path fill="#777" d="M19 6h5l-2.500 3z"/></svg></button><input aria-label="命令行" placeholder="键入命令"></div>
  </div>
</section>
</div>
</div>
</div>
</body>
</html>
```
FILE: styles.css
```css
* { box-sizing: border-box; }
body { margin: 0; background: #666; font: 12px/18px "Liberation Sans", "Noto Sans CJK SC", sans-serif; color: #111; }
button { border: 0; padding: 0; margin: 0; background: none; font: inherit; color: inherit; }
svg { display: block; fill: none; flex: none; }
h1 { margin: 0; }
.app { height: 100vh; display: flex; flex-direction: column; overflow: hidden; }

.k { stroke: #3c3c3c; }
.b { stroke: #2272b0; }
.n { stroke: #2022a0; }
.m { stroke: #b544bd; }
.lb { fill: #b9dff7; }
.pf { fill: #f4f4f4; }
.gf { fill: #b4b4b4; }
.ico { width: 16px; height: 16px; }

.topbar { display: flex; height: 6px; flex: none; padding: 0 3px 0 4px; border-bottom: 1px solid #3e3e3e; }
.strip { display: flex; background: #ececec; height: 5px; min-width: 0; }
.combo { appearance: none; border: 0; border-right: 1px solid #6f9fc5; flex: 1; min-width: 0; height: 5px; padding: 0; background: linear-gradient(#b9c9f4, #b9c9f4) right / 14px 5px no-repeat #fff; }
.strip-a { flex: 229 0 0; padding-left: 10px; margin-right: 7px; background: linear-gradient(90deg, #555 10px, #ececec 10px); }
.strip-b { flex: 395 0 0; margin-right: 11px; }
.strip-c { flex: 150 0 0; margin-right: 5px; }
.strip-d { flex: 158 0 0; margin-right: 8px; }
.strip-e { flex: 52 0 0; background: #fff; }
.bits { width: 46px; height: 5px; }
.bits-s { width: 23px; height: 5px; }
.bits-l { width: 68px; height: 5px; }

.main { flex: 1; min-height: 0; display: flex; padding: 6px 4px 0; gap: 4px; }
.side { width: 87px; flex: none; overflow: hidden; background: #f0f0ee; border-radius: 5px 5px 0 0; }
.side-title { height: 19px; padding-left: 11px; font: bold 14px/21px "Liberation Mono", "Noto Sans CJK SC", monospace; background: repeating-linear-gradient(#444 0 1px, transparent 1px 2px) 3px 5px / 4px 12px no-repeat, linear-gradient(90deg, #a5a5a5, #8c8c8c); }
.group { padding: 2px 0 3px 3px; border-bottom: 1px solid #a8a8a8; }
.group.head { padding: 7px 0 0 3px; background: linear-gradient(90deg, #ece8d4, #f0eddf); border-bottom: 2px solid #77746c; }
.group.tight { padding: 2px 0 2px 3px; }
.group.white { background: #f9fdfd; padding: 1px 0 2px 3px; }
.group.last { border: 0; padding-bottom: 2px; }
.group.rest { background: #ece8d8; border: 0; padding-top: 2px; }
.item { display: flex; width: 100%; height: 18px; align-items: center; gap: 5px; }
.lbl { width: 48px; white-space: nowrap; text-align: justify; text-align-last: justify; }

.work { flex: 1; min-width: 0; display: flex; flex-direction: column; }
.upper { flex: 1; min-height: 0; display: flex; gap: 5px; }
.drawing { flex: 1; min-width: 0; display: flex; flex-direction: column; border: 1px solid #aaa; border-right: 2px solid #eee; border-bottom-color: #d5d0c4; }
.canvas { flex: 1; min-height: 0; background: #000; position: relative; }
.scene { width: 100%; height: 100%; position: absolute; inset: 0; }
.wire { stroke: #fff; stroke-width: 1px; shape-rendering: crispEdges; }
.axis { fill: #ddd; font: 300 19px Lato, sans-serif; }
.face { fill: #555; font: 15px "Noto Sans CJK SC", sans-serif; text-anchor: middle; }
.compass { fill: #8b8b8b; font: 13px "Noto Sans CJK SC", sans-serif; text-anchor: middle; }
.compass .far { font-size: 9px; }
.wcs { position: absolute; right: 41px; top: 130px; width: 48px; height: 17px; border: 1px solid #75757d; border-radius: 3px; background: #9898a2; color: #55555f; font-size: 11px; line-height: 15px; text-align: left; padding-left: 4px; }

.tabs { height: 16px; flex: none; display: flex; background: #efe9dc; padding-left: 1px; line-height: 16px; }
.nav { width: 14px; border-right: 1px solid #c4bfb2; }
.nav svg { width: 14px; height: 14px; }
.tab { padding: 0 4px 0 4px; line-height: 16px; }
.tab.active { background: #000; color: #fff; padding: 0 12px 0 10px; clip-path: polygon(0 0, 100% 0, 88% 100%, 14% 100%); }
.slash { width: 10px; height: 16px; }

.palettes { display: flex; gap: 4px; align-items: flex-start; padding-right: 2px; }
.palette { width: 24px; background: #eee; border: 1px solid #424242; border-top: 0; display: flex; flex-direction: column; }
.palette button { height: 22px; display: flex; align-items: center; justify-content: center; }
.grip { height: 8px; flex: none; background: repeating-linear-gradient(90deg, #333 0 1px, transparent 1px 2px) 3px 3px / 15px 3px no-repeat #686868; }
.hsep { height: 1px; margin: 3px 2px 3px; background: #999; }
.abc { fill: #111; font: bold 8px "Liberation Mono", monospace; }
.letter { font: 20px/22px "Liberation Sans", sans-serif; color: #333; }

.toolrow { align-self: flex-start; height: 26px; margin-top: 3px; flex: none; display: flex; align-items: center; background: #eee; border: 1px solid #3d3d3d; }
.toolrow button { width: 23px; height: 24px; display: flex; align-items: center; justify-content: center; }
.vgrip { width: 7px; height: 24px; background: repeating-linear-gradient(#333 0 1px, transparent 1px 2px) 2px 4px / 4px 15px no-repeat #7c7c7c; }
.vsep { width: 1px; height: 16px; margin: 0 3px 0 2px; background: #aaa; }
.zi { fill: #111; font: 12px "Noto Sans CJK SC", sans-serif; }

.command { height: 36px; margin-top: 7px; flex: none; display: flex; overflow: hidden; }
.cmd-side { width: 21px; flex: none; background: linear-gradient(#777, #4b4b4b); display: flex; flex-direction: column; align-items: center; gap: 7px; padding-top: 4px; }
.dots { width: 17px; height: 5px; background: repeating-linear-gradient(90deg, #aaa 0 1px, transparent 1px 2px); }
.close svg { width: 10px; height: 10px; }
.cmd-body { flex: 1; background: #fff; }
.history { display: block; height: 20px; padding-left: 4px; background: #c8c8c8; border-bottom: 1px solid #888; font: 13px/19px "Liberation Mono", "Noto Sans CJK SC", monospace; white-space: pre; }
.cmd-line { display: flex; padding-left: 6px; gap: 6px; height: 20px; }
.prompt svg { width: 26px; height: 14px; }
.cmd-line input { flex: 1; border: 0; padding: 0; background: none; font: italic 13px/18px "Noto Sans CJK SC", sans-serif; }
.cmd-line input::placeholder { color: #888; }
```
